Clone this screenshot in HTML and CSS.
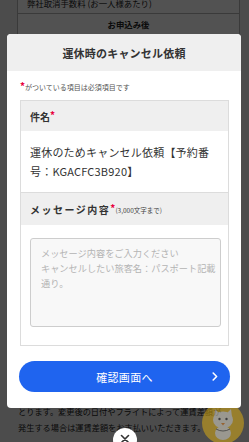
FILE: index.html
```html
<!DOCTYPE html>
<html lang="ja">
<head>
<meta charset="utf-8">
<title>運休時のキャンセル依頼</title>
<link rel="stylesheet" href="styles.css">
</head>
<body>
<div class="page">
  <div class="bg-table">
    <div class="bg-row bg-row-left">弊社取消手数料 (お一人様あたり)</div>
    <div class="bg-row bg-row-center">お申込み後</div>
    <div class="bg-row bg-row-center"></div>
  </div>
  <p class="bg-text">とります。変更後の日付やフライトによって運賃差額が<br>発生する場合は運賃差額をお支払いいただきます。</p>
</div>

<div class="overlay"></div>

<div class="mascot">
  <svg width="42" height="42" viewBox="0 0 42 42">
    <circle cx="21" cy="21" r="21" fill="#e3b310"/>
    <path d="M12 15 L13 7 L18 12 Z M30 15 L29 7 L24 12 Z" fill="#e8e4d4"/>
    <ellipse cx="21" cy="18" rx="10" ry="8.5" fill="#e8e4d4"/>
    <ellipse cx="21" cy="31" rx="8" ry="7" fill="#e8e4d4"/>
    <circle cx="17.5" cy="17" r="1.2" fill="#333"/>
    <circle cx="24.5" cy="17" r="1.2" fill="#333"/>
    <path d="M19 21 L23 21 L21 23.5 Z" fill="#e07a1a"/>
    <path d="M14 27 Q21 31 28 27" stroke="#333" stroke-width="0.8" fill="none"/>
  </svg>
</div>

<div class="modal">
  <div class="modal-header">運休時のキャンセル依頼</div>
  <div class="modal-body">
    <p class="note"><span class="req">*</span>がついている項目は必須項目です</p>
    <div class="form-box">
      <div class="section-head">件名<span class="req">*</span></div>
      <div class="subject">運休のためキャンセル依頼【予約番号：KGACFC3B920】</div>
      <div class="section-head section-head-msg"><span class="msg-label">メッセージ内容</span><span class="req">*</span><span class="limit">(3,000文字まで)</span></div>
      <div class="msg-body">
        <textarea class="msg-input" placeholder="メッセージ内容をご入力ください&#10;キャンセルしたい旅客名：パスポート記載通り。"></textarea>
      </div>
    </div>
  </div>
  <div class="modal-footer">
    <button class="confirm-btn" type="button"><span class="btn-label">確認画面へ</span><svg class="chev" width="6" height="9" viewBox="0 0 6 9"><path d="M1.2 1 L4.6 4.5 L1.2 8" stroke="#fff" stroke-width="1.6" fill="none" stroke-linecap="round" stroke-linejoin="round"/></svg></button>
  </div>
</div>

<div class="close-btn">
  <svg width="10" height="10" viewBox="0 0 10 10"><path d="M1.5 1.5 L8.5 8.5 M8.5 1.5 L1.5 8.5" stroke="#333" stroke-width="1.6" stroke-linecap="round"/></svg>
</div>
</body>
</html>
```
FILE: styles.css
```css
* { box-sizing: border-box; }
html, body {
  margin: 0;
  padding: 0;
  width: 249px;
  height: 442px;
  overflow: hidden;
}
body {
  font-family: "Noto Sans CJK JP", "Noto Sans", sans-serif;
  color: #333;
  background: #ececec;
  position: relative;
}
.page {
  display: flex;
  flex-direction: column;
}
.bg-table {
  margin: -7px 9px 0 17px;
  width: 223px;
  border-left: 1px solid #b5b5b5;
  border-right: 1px solid #b5b5b5;
  background: #fff;
}
.bg-row {
  height: 21px;
  line-height: 21px;
  font-size: 8.4px;
  color: #222;
  border-bottom: 1px solid #b5b5b5;
  white-space: nowrap;
  overflow: hidden;
}
.bg-row-left { padding-left: 9px; }
.bg-row-center { text-align: center; font-weight: bold; }
.bg-text {
  margin: 347px 0 0 18px;
  font-size: 8.2px;
  line-height: 16px;
  color: #222;
  white-space: nowrap;
}
.overlay {
  position: absolute;
  inset: 0;
  background: rgba(0, 0, 0, 0.68);
}
.mascot {
  position: absolute;
  left: 202px;
  top: 402px;
  width: 42px;
  height: 42px;
  opacity: 0.5;
}
.mascot svg { display: block; }
.modal {
  position: absolute;
  left: 7px;
  top: 34px;
  width: 234px;
  height: 374px;
  background: #fff;
  border-radius: 4px;
  overflow: hidden;
  display: flex;
  flex-direction: column;
}
.modal-header {
  height: 37px;
  background: #efefef;
  display: flex;
  align-items: center;
  justify-content: center;
  font-size: 11px;
  font-weight: bold;
  color: #333;
  letter-spacing: 0.2px;
}
.modal-body {
  padding: 11px 12px 0 13px;
}
.note {
  margin: 0 0 8px;
  font-size: 7px;
  line-height: 10px;
  color: #555;
  white-space: nowrap;
}
.req {
  color: #e8003d;
  font-weight: bold;
}
.note .req {
  font-size: 10px;
  vertical-align: top;
  line-height: 8px;
}
.form-box {
  border: 1px solid #dcdcdc;
}
.section-head {
  height: 30px;
  background: #efefef;
  display: flex;
  align-items: center;
  padding-left: 9px;
  font-size: 10px;
  font-weight: bold;
  color: #333;
  white-space: nowrap;
}
.section-head .req {
  font-size: 10px;
  margin-top: -4px;
}
.section-head-msg {
  height: 33px;
  border-top: 1px solid #dcdcdc;
}
.msg-label { letter-spacing: 1.5px; }
.limit {
  font-size: 6.5px;
  font-weight: normal;
  color: #444;
  margin-top: 1px;
}
.subject {
  padding: 12px 9px 12px 9px;
  font-size: 11px;
  line-height: 18.5px;
  letter-spacing: 0.2px;
  color: #333;
}
.msg-body {
  padding: 13px 7px 18px 9px;
}
.msg-input {
  display: block;
  width: 100%;
  height: 89px;
  margin: 0;
  resize: none;
  background: #f8f8f8;
  border: 1px solid #cdcdcd;
  border-radius: 3px;
  padding: 7px 3px 0 10px;
  font-family: "Noto Sans CJK JP", "Noto Sans", sans-serif;
  font-size: 9.2px;
  line-height: 15px;
  color: #333;
  outline: none;
}
.msg-input::placeholder {
  color: #b4b4b4;
}
.modal-footer {
  margin-top: auto;
  padding: 0 11px 16px 12px;
}
.confirm-btn {
  position: relative;
  display: flex;
  align-items: center;
  justify-content: center;
  width: 100%;
  height: 31px;
  border: none;
  border-radius: 16px;
  background: #1f64ef;
  color: #fff;
  font-family: "Noto Sans CJK JP", "Noto Sans", sans-serif;
  font-size: 11px;
  letter-spacing: 0.3px;
  padding: 0;
}
.btn-label { display: block; line-height: 16px; }
.chev {
  position: absolute;
  right: 12px;
  top: 11px;
}
.close-btn {
  position: absolute;
  left: 113px;
  top: 428px;
  width: 24px;
  height: 24px;
  border-radius: 50%;
  background: #fff;
  display: flex;
  justify-content: center;
  padding-top: 6px;
}
.close-btn svg { display: block; }
```
